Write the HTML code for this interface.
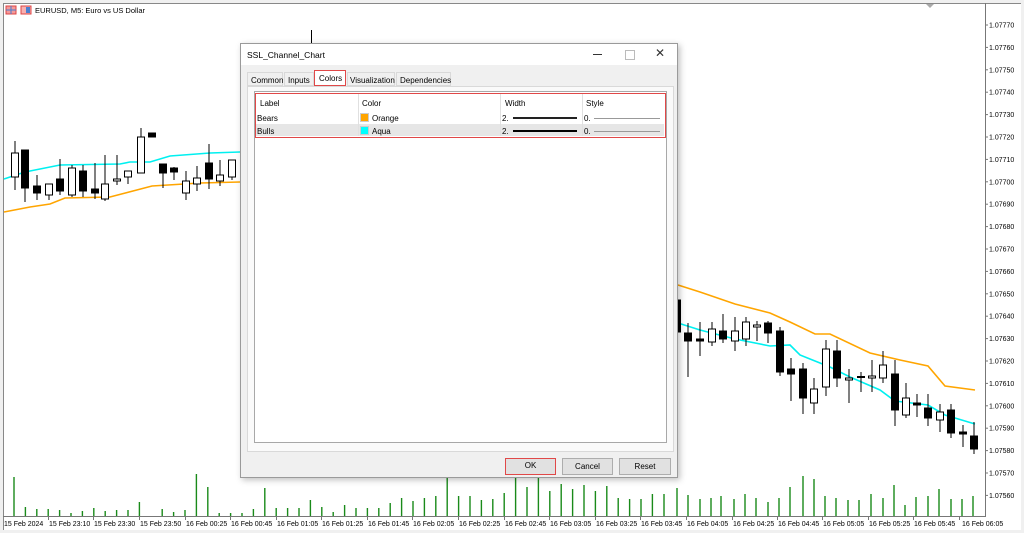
<!DOCTYPE html>
<html><head><meta charset="utf-8"><style>
body{margin:0;width:1024px;height:533px;overflow:hidden;background:#f0f0f0;font-family:"Liberation Sans",sans-serif;}
svg text{font-family:"Liberation Sans",sans-serif;}
</style></head><body>
<svg width="1024" height="533" viewBox="0 0 1024 533" style="position:absolute;left:0;top:0">
<rect x="0" y="0" width="1024" height="533" fill="#f0f0f0"/>
<rect x="3" y="3" width="1018" height="527" fill="#fff"/>
<line x1="3" y1="3.5" x2="1021" y2="3.5" stroke="#888"/>
<line x1="3.5" y1="3" x2="3.5" y2="530" stroke="#888"/>
<line x1="985.5" y1="3" x2="985.5" y2="516" stroke="#777"/>
<line x1="3" y1="516.5" x2="986" y2="516.5" stroke="#777"/>
<path d="M926 4 L934 4 L930 8Z" fill="#aaa"/>
<!-- header icons -->
<rect x="6" y="6" width="10" height="8" fill="#f39a9a" stroke="#d44"/><line x1="11" y1="6" x2="11" y2="14" stroke="#4a7fd0"/><line x1="6" y1="10" x2="16" y2="10" stroke="#4a7fd0"/>
<rect x="21" y="6" width="10" height="8" fill="#f8b0b0" stroke="#d44"/><rect x="26" y="7" width="4" height="6" fill="#4a7fd0"/>
<text x="35" y="13" font-size="7.5" fill="#000">EURUSD, M5:  Euro vs US Dollar</text>
<!-- price axis -->
<g font-size="7" fill="#000">
<g stroke="#777">
<line x1="985" y1="25" x2="988" y2="25"/><line x1="985" y1="47.4" x2="988" y2="47.4"/><line x1="985" y1="69.8" x2="988" y2="69.8"/><line x1="985" y1="92.2" x2="988" y2="92.2"/><line x1="985" y1="114.6" x2="988" y2="114.6"/><line x1="985" y1="137" x2="988" y2="137"/><line x1="985" y1="159.4" x2="988" y2="159.4"/><line x1="985" y1="181.8" x2="988" y2="181.8"/><line x1="985" y1="204.2" x2="988" y2="204.2"/><line x1="985" y1="226.6" x2="988" y2="226.6"/><line x1="985" y1="249" x2="988" y2="249"/><line x1="985" y1="271.4" x2="988" y2="271.4"/><line x1="985" y1="293.8" x2="988" y2="293.8"/><line x1="985" y1="316.2" x2="988" y2="316.2"/><line x1="985" y1="338.6" x2="988" y2="338.6"/><line x1="985" y1="361" x2="988" y2="361"/><line x1="985" y1="383.4" x2="988" y2="383.4"/><line x1="985" y1="405.8" x2="988" y2="405.8"/><line x1="985" y1="428.2" x2="988" y2="428.2"/><line x1="985" y1="450.6" x2="988" y2="450.6"/><line x1="985" y1="473" x2="988" y2="473"/><line x1="985" y1="495.4" x2="988" y2="495.4"/>
</g>
<text x="989" y="27.5">1.07770</text><text x="989" y="49.9">1.07760</text><text x="989" y="72.3">1.07750</text><text x="989" y="94.7">1.07740</text><text x="989" y="117.1">1.07730</text><text x="989" y="139.5">1.07720</text><text x="989" y="161.9">1.07710</text><text x="989" y="184.3">1.07700</text><text x="989" y="206.7">1.07690</text><text x="989" y="229.1">1.07680</text><text x="989" y="251.5">1.07670</text><text x="989" y="273.9">1.07660</text><text x="989" y="296.3">1.07650</text><text x="989" y="318.7">1.07640</text><text x="989" y="341.1">1.07630</text><text x="989" y="363.5">1.07620</text><text x="989" y="385.9">1.07610</text><text x="989" y="408.3">1.07600</text><text x="989" y="430.7">1.07590</text><text x="989" y="453.1">1.07580</text><text x="989" y="475.5">1.07570</text><text x="989" y="497.9">1.07560</text>
</g>
<!-- time axis -->
<g font-size="7" fill="#000">
<text x="4" y="526">15 Feb 2024</text><text x="49" y="526">15 Feb 23:10</text><text x="94" y="526">15 Feb 23:30</text><text x="140" y="526">15 Feb 23:50</text><text x="186" y="526">16 Feb 00:25</text><text x="231" y="526">16 Feb 00:45</text><text x="277" y="526">16 Feb 01:05</text><text x="322" y="526">16 Feb 01:25</text><text x="368" y="526">16 Feb 01:45</text><text x="413" y="526">16 Feb 02:05</text><text x="459" y="526">16 Feb 02:25</text><text x="505" y="526">16 Feb 02:45</text><text x="550" y="526">16 Feb 03:05</text><text x="596" y="526">16 Feb 03:25</text><text x="641" y="526">16 Feb 03:45</text><text x="687" y="526">16 Feb 04:05</text><text x="733" y="526">16 Feb 04:25</text><text x="778" y="526">16 Feb 04:45</text><text x="823" y="526">16 Feb 05:05</text><text x="869" y="526">16 Feb 05:25</text><text x="914" y="526">16 Feb 05:45</text><text x="962" y="526">16 Feb 06:05</text>
</g>
<g stroke="#777"><line x1="48.5" y1="516" x2="48.5" y2="520"/><line x1="93.5" y1="516" x2="93.5" y2="520"/><line x1="139.5" y1="516" x2="139.5" y2="520"/><line x1="185.5" y1="516" x2="185.5" y2="520"/><line x1="230.5" y1="516" x2="230.5" y2="520"/><line x1="276.5" y1="516" x2="276.5" y2="520"/><line x1="321.5" y1="516" x2="321.5" y2="520"/><line x1="367.5" y1="516" x2="367.5" y2="520"/><line x1="412.5" y1="516" x2="412.5" y2="520"/><line x1="458.5" y1="516" x2="458.5" y2="520"/><line x1="504.5" y1="516" x2="504.5" y2="520"/><line x1="549.5" y1="516" x2="549.5" y2="520"/><line x1="595.5" y1="516" x2="595.5" y2="520"/><line x1="640.5" y1="516" x2="640.5" y2="520"/><line x1="686.5" y1="516" x2="686.5" y2="520"/><line x1="732.5" y1="516" x2="732.5" y2="520"/><line x1="777.5" y1="516" x2="777.5" y2="520"/><line x1="822.5" y1="516" x2="822.5" y2="520"/><line x1="868.5" y1="516" x2="868.5" y2="520"/><line x1="913.5" y1="516" x2="913.5" y2="520"/><line x1="959.5" y1="516" x2="959.5" y2="520"/></g>
<!-- volumes -->
<g stroke="#1a8a1a" stroke-width="1.4">
<line x1="14" y1="477" x2="14" y2="516"/><line x1="25.4" y1="507" x2="25.4" y2="516"/><line x1="36.8" y1="509" x2="36.8" y2="516"/><line x1="48.2" y1="509" x2="48.2" y2="516"/><line x1="59.6" y1="510" x2="59.6" y2="516"/><line x1="71" y1="513" x2="71" y2="516"/><line x1="82.4" y1="511" x2="82.4" y2="516"/><line x1="93.8" y1="508" x2="93.8" y2="516"/><line x1="105.2" y1="511" x2="105.2" y2="516"/><line x1="116.6" y1="510" x2="116.6" y2="516"/><line x1="128" y1="510" x2="128" y2="516"/><line x1="139.4" y1="502" x2="139.4" y2="516"/><line x1="162.2" y1="509" x2="162.2" y2="516"/><line x1="173.6" y1="512" x2="173.6" y2="516"/><line x1="185" y1="510" x2="185" y2="516"/><line x1="196.4" y1="474" x2="196.4" y2="516"/><line x1="207.8" y1="487" x2="207.8" y2="516"/><line x1="219.2" y1="513" x2="219.2" y2="516"/><line x1="230.6" y1="513" x2="230.6" y2="516"/><line x1="242" y1="513" x2="242" y2="516"/><line x1="253.4" y1="509" x2="253.4" y2="516"/><line x1="264.8" y1="488" x2="264.8" y2="516"/><line x1="276.2" y1="508" x2="276.2" y2="516"/><line x1="287.6" y1="508" x2="287.6" y2="516"/><line x1="299" y1="508" x2="299" y2="516"/><line x1="310.4" y1="500" x2="310.4" y2="516"/><line x1="321.8" y1="507" x2="321.8" y2="516"/><line x1="333.2" y1="512" x2="333.2" y2="516"/><line x1="344.6" y1="505" x2="344.6" y2="516"/><line x1="356" y1="508" x2="356" y2="516"/><line x1="367.4" y1="508" x2="367.4" y2="516"/><line x1="378.8" y1="508" x2="378.8" y2="516"/><line x1="390.2" y1="503" x2="390.2" y2="516"/><line x1="401.6" y1="498" x2="401.6" y2="516"/><line x1="413" y1="501" x2="413" y2="516"/><line x1="424.4" y1="498" x2="424.4" y2="516"/><line x1="435.8" y1="496" x2="435.8" y2="516"/><line x1="447.2" y1="478" x2="447.2" y2="516"/><line x1="458.6" y1="496" x2="458.6" y2="516"/><line x1="470" y1="496" x2="470" y2="516"/><line x1="481.4" y1="500" x2="481.4" y2="516"/><line x1="492.8" y1="499" x2="492.8" y2="516"/><line x1="504.2" y1="493" x2="504.2" y2="516"/><line x1="515.6" y1="478" x2="515.6" y2="516"/><line x1="527" y1="487" x2="527" y2="516"/><line x1="538.4" y1="478" x2="538.4" y2="516"/><line x1="549.8" y1="491" x2="549.8" y2="516"/><line x1="561.2" y1="484" x2="561.2" y2="516"/><line x1="572.6" y1="489" x2="572.6" y2="516"/><line x1="584" y1="485" x2="584" y2="516"/><line x1="595.4" y1="491" x2="595.4" y2="516"/><line x1="606.8" y1="486" x2="606.8" y2="516"/><line x1="618.2" y1="498" x2="618.2" y2="516"/><line x1="629.6" y1="499" x2="629.6" y2="516"/><line x1="641" y1="499" x2="641" y2="516"/><line x1="652.4" y1="494" x2="652.4" y2="516"/><line x1="664" y1="494" x2="664" y2="516"/><line x1="677" y1="488" x2="677" y2="516"/><line x1="688" y1="495" x2="688" y2="516"/><line x1="700" y1="499" x2="700" y2="516"/><line x1="711" y1="498" x2="711" y2="516"/><line x1="721" y1="496" x2="721" y2="516"/><line x1="734" y1="499" x2="734" y2="516"/><line x1="745" y1="494" x2="745" y2="516"/><line x1="756" y1="498" x2="756" y2="516"/><line x1="768" y1="502" x2="768" y2="516"/><line x1="779" y1="498" x2="779" y2="516"/><line x1="790" y1="487" x2="790" y2="516"/><line x1="803" y1="476" x2="803" y2="516"/><line x1="814" y1="479" x2="814" y2="516"/><line x1="825" y1="496" x2="825" y2="516"/><line x1="836" y1="498" x2="836" y2="516"/><line x1="848" y1="500" x2="848" y2="516"/><line x1="859" y1="500" x2="859" y2="516"/><line x1="871" y1="494" x2="871" y2="516"/><line x1="883" y1="498" x2="883" y2="516"/><line x1="894" y1="485" x2="894" y2="516"/><line x1="905" y1="505" x2="905" y2="516"/><line x1="916" y1="497" x2="916" y2="516"/><line x1="928" y1="496" x2="928" y2="516"/><line x1="939" y1="489" x2="939" y2="516"/><line x1="951" y1="499" x2="951" y2="516"/><line x1="962" y1="499" x2="962" y2="516"/><line x1="973" y1="496" x2="973" y2="516"/>
</g>
<!-- lines -->
<polyline fill="none" stroke="#ffa500" stroke-width="1.6" points="4,212 30,207 50,204 65,198 110,197 152,186 200,183 240,182"/>
<polyline fill="none" stroke="#00f0f0" stroke-width="1.6" points="4,179 25,172 60,165 120,164 130,162 150,162 170,156 210,153 240,152"/>
<polyline fill="none" stroke="#ffa500" stroke-width="1.6" points="678,285 700,292 735,304 770,313 790,322 815,334 830,334 870,353 900,360 928,366 945,386 975,390"/>
<polyline fill="none" stroke="#00f0f0" stroke-width="1.6" points="678,323 700,330 735,339 770,346 790,345 800,355 810,359 830,367 850,377 880,390 895,401 928,405 945,415 975,424"/>
<!-- candles -->
<g stroke="#000" stroke-width="1">
<line x1="311.5" y1="30" x2="311.5" y2="45"/>
<line x1="15" y1="141" x2="15" y2="190"/><rect x="11.5" y="153" width="7" height="24" fill="#fff"/>
<line x1="25" y1="150" x2="25" y2="202"/><rect x="21.5" y="150" width="7" height="38" fill="#000"/>
<line x1="37" y1="175" x2="37" y2="200"/><rect x="33.5" y="186" width="7" height="7" fill="#000"/>
<line x1="49" y1="184" x2="49" y2="200"/><rect x="45.5" y="184" width="7" height="11" fill="#fff"/>
<line x1="60" y1="159" x2="60" y2="195"/><rect x="56.5" y="179" width="7" height="12" fill="#000"/>
<line x1="72" y1="165" x2="72" y2="197"/><rect x="68.5" y="168" width="7" height="27" fill="#fff"/>
<line x1="83" y1="165" x2="83" y2="197"/><rect x="79.5" y="171" width="7" height="20" fill="#000"/>
<line x1="95" y1="163" x2="95" y2="199"/><rect x="91.5" y="189" width="7" height="4" fill="#000"/>
<line x1="105" y1="155" x2="105" y2="201"/><rect x="101.5" y="184" width="7" height="15" fill="#fff"/>
<line x1="117" y1="155" x2="117" y2="185"/><rect x="113.5" y="179" width="7" height="2" fill="#fff"/>
<line x1="128" y1="171" x2="128" y2="184"/><rect x="124.5" y="171" width="7" height="6" fill="#fff"/>
<line x1="141" y1="128" x2="141" y2="173"/><rect x="137.5" y="137" width="7" height="36" fill="#fff"/>
<rect x="148.5" y="133" width="7" height="4" fill="#000"/>
<line x1="163" y1="164" x2="163" y2="188"/><rect x="159.5" y="164" width="7" height="9" fill="#000"/>
<line x1="174" y1="167" x2="174" y2="180"/><rect x="170.5" y="168" width="7" height="4" fill="#000"/>
<line x1="186" y1="171" x2="186" y2="200"/><rect x="182.5" y="181" width="7" height="12" fill="#fff"/>
<line x1="197" y1="166" x2="197" y2="191"/><rect x="193.5" y="178" width="7" height="6" fill="#fff"/>
<line x1="209" y1="144" x2="209" y2="189"/><rect x="205.5" y="163" width="7" height="16" fill="#000"/>
<line x1="220" y1="160" x2="220" y2="186"/><rect x="216.5" y="175" width="7" height="6" fill="#fff"/>
<line x1="232" y1="160" x2="232" y2="180"/><rect x="228.5" y="160" width="7" height="17" fill="#fff"/>
<rect x="676.5" y="300" width="4" height="32" fill="#000"/>
<line x1="688" y1="323" x2="688" y2="377"/><rect x="684.5" y="333" width="7" height="8" fill="#000"/>
<line x1="700" y1="322" x2="700" y2="356"/><rect x="696.5" y="339" width="7" height="2" fill="#000"/>
<line x1="712" y1="322" x2="712" y2="346"/><rect x="708.5" y="329" width="7" height="13" fill="#fff"/>
<line x1="723" y1="314" x2="723" y2="343"/><rect x="719.5" y="331" width="7" height="8" fill="#000"/>
<line x1="735" y1="317" x2="735" y2="351"/><rect x="731.5" y="331" width="7" height="10" fill="#fff"/>
<line x1="746" y1="317" x2="746" y2="346"/><rect x="742.5" y="322" width="7" height="17" fill="#fff"/>
<line x1="757" y1="321" x2="757" y2="341"/><rect x="753.5" y="325" width="7" height="2" fill="#fff"/>
<line x1="768" y1="321" x2="768" y2="343"/><rect x="764.5" y="323" width="7" height="10" fill="#000"/>
<line x1="780" y1="327" x2="780" y2="376"/><rect x="776.5" y="331" width="7" height="41" fill="#000"/>
<line x1="791" y1="358" x2="791" y2="401"/><rect x="787.5" y="369" width="7" height="5" fill="#000"/>
<line x1="803" y1="363" x2="803" y2="414"/><rect x="799.5" y="369" width="7" height="29" fill="#000"/>
<line x1="814" y1="378" x2="814" y2="414"/><rect x="810.5" y="389" width="7" height="14" fill="#fff"/>
<line x1="826" y1="340" x2="826" y2="396"/><rect x="822.5" y="349" width="7" height="38" fill="#fff"/>
<line x1="837" y1="340" x2="837" y2="387"/><rect x="833.5" y="351" width="7" height="27" fill="#000"/>
<line x1="849" y1="369" x2="849" y2="403"/><rect x="845.5" y="378" width="7" height="2" fill="#fff"/>
<line x1="861" y1="372" x2="861" y2="392"/><rect x="857.5" y="376.5" width="7" height="1" fill="#fff"/>
<line x1="872" y1="360" x2="872" y2="392"/><rect x="868.5" y="376" width="7" height="2" fill="#fff"/>
<line x1="883" y1="351" x2="883" y2="383"/><rect x="879.5" y="365" width="7" height="13" fill="#fff"/>
<line x1="895" y1="360" x2="895" y2="426"/><rect x="891.5" y="374" width="7" height="36" fill="#000"/>
<line x1="906" y1="383" x2="906" y2="418"/><rect x="902.5" y="398" width="7" height="17" fill="#fff"/>
<line x1="917" y1="394" x2="917" y2="417"/><rect x="913.5" y="403" width="7" height="2" fill="#000"/>
<line x1="928" y1="394" x2="928" y2="426"/><rect x="924.5" y="408" width="7" height="10" fill="#000"/>
<line x1="940" y1="404" x2="940" y2="432"/><rect x="936.5" y="412" width="7" height="8" fill="#fff"/>
<line x1="951" y1="404" x2="951" y2="438"/><rect x="947.5" y="410" width="7" height="23" fill="#000"/>
<line x1="963" y1="425" x2="963" y2="447"/><rect x="959.5" y="432" width="7" height="2" fill="#000"/>
<line x1="974" y1="422" x2="974" y2="454"/><rect x="970.5" y="436" width="7" height="13" fill="#000"/>
</g>
</svg>

<!-- dialog -->
<div style="position:absolute;left:240px;top:43px;width:438px;height:435px;background:#f0f0f0;border:1px solid #9a9a9a;box-sizing:border-box;box-shadow:2px 2px 6px rgba(0,0,0,0.25);font-size:8px;color:#000;">
  <div style="position:absolute;left:0;top:0;width:436px;height:21px;background:#fff;"></div>
  <div style="position:absolute;left:6px;top:6px;font-size:8.5px;">SSL_Channel_Chart</div>
  <div style="position:absolute;left:352px;top:10px;width:9px;height:1px;background:#333;"></div>
  <div style="position:absolute;left:384px;top:6px;width:8px;height:8px;border:1px solid #bbb;"></div>
  <div style="position:absolute;left:414px;top:2px;font-size:12px;color:#333;">✕</div>
  <!-- tabs -->
  <div style="position:absolute;left:6px;top:28px;width:36px;height:14px;border:1px solid #d9d9d9;background:#f0f0f0;box-sizing:border-box;padding:3px 0 0 3px;">Common</div>
  <div style="position:absolute;left:43px;top:28px;width:30px;height:14px;border:1px solid #d9d9d9;box-sizing:border-box;padding:3px 0 0 3px;">Inputs</div>
  <div style="position:absolute;left:73px;top:26px;width:32px;height:16px;border:1px solid #e04848;background:#fff;box-sizing:border-box;padding:3px 0 0 4px;">Colors</div>
  <div style="position:absolute;left:106px;top:28px;width:48px;height:14px;border:1px solid #d9d9d9;box-sizing:border-box;padding:3px 0 0 2px;">Visualization</div>
  <div style="position:absolute;left:155px;top:28px;width:55px;height:14px;border:1px solid #d9d9d9;box-sizing:border-box;padding:3px 0 0 3px;">Dependencies</div>
  <!-- panel -->
  <div style="position:absolute;left:6px;top:42px;width:427px;height:366px;background:#fafafa;border:1px solid #d9d9d9;box-sizing:border-box;"></div>
  <div style="position:absolute;left:13px;top:47px;width:413px;height:352px;background:#fff;border:1px solid #a8a8a8;box-sizing:border-box;"></div>
  <!-- table -->
  <div style="position:absolute;left:14px;top:49px;width:411px;height:45px;border:1.5px solid #e04848;box-sizing:border-box;">
    <div style="position:absolute;left:0;top:30px;width:408px;height:12px;background:#e6e6e6;"></div>
    <div style="position:absolute;left:102px;top:0;width:1px;height:42px;background:#e0e0e0;"></div>
    <div style="position:absolute;left:244px;top:0;width:1px;height:42px;background:#e0e0e0;"></div>
    <div style="position:absolute;left:326px;top:0;width:1px;height:42px;background:#e0e0e0;"></div>
    <div style="position:absolute;left:4px;top:5px;">Label</div>
    <div style="position:absolute;left:106px;top:5px;">Color</div>
    <div style="position:absolute;left:249px;top:5px;">Width</div>
    <div style="position:absolute;left:330px;top:5px;">Style</div>
    <div style="position:absolute;left:1px;top:20px;">Bears</div>
    <div style="position:absolute;left:104px;top:19px;width:9px;height:9px;background:#ffa500;border:1px solid #ccc;box-sizing:border-box;"></div>
    <div style="position:absolute;left:116px;top:20px;">Orange</div>
    <div style="position:absolute;left:246px;top:20px;">2.</div>
    <div style="position:absolute;left:257px;top:23px;width:64px;height:2px;background:#222;"></div>
    <div style="position:absolute;left:328px;top:20px;">0.</div>
    <div style="position:absolute;left:338px;top:24px;width:66px;height:1px;background:#999;"></div>
    <div style="position:absolute;left:1px;top:33px;">Bulls</div>
    <div style="position:absolute;left:104px;top:32px;width:9px;height:9px;background:#00ffff;border:1px solid #ccc;box-sizing:border-box;"></div>
    <div style="position:absolute;left:116px;top:33px;">Aqua</div>
    <div style="position:absolute;left:246px;top:33px;">2.</div>
    <div style="position:absolute;left:257px;top:36px;width:64px;height:2px;background:#000;"></div>
    <div style="position:absolute;left:328px;top:33px;">0.</div>
    <div style="position:absolute;left:338px;top:37px;width:66px;height:1px;background:#999;"></div>
  </div>
  <!-- buttons -->
  <div style="position:absolute;left:264px;top:414px;width:51px;height:17px;background:#e1e1e1;border:1.5px solid #e04848;box-sizing:border-box;text-align:center;line-height:14px;">OK</div>
  <div style="position:absolute;left:321px;top:414px;width:51px;height:17px;background:#e1e1e1;border:1px solid #adadad;box-sizing:border-box;text-align:center;line-height:15px;">Cancel</div>
  <div style="position:absolute;left:378px;top:414px;width:52px;height:17px;background:#e1e1e1;border:1px solid #adadad;box-sizing:border-box;text-align:center;line-height:15px;">Reset</div>
</div>
</body></html>
